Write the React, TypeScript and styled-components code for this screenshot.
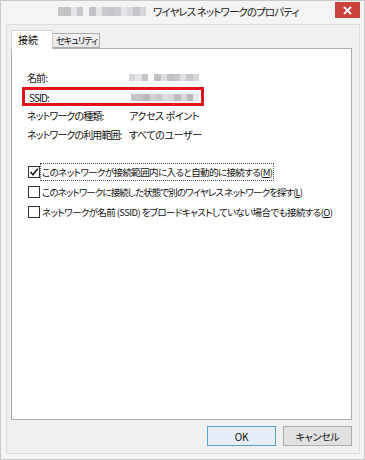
import React from "react";
import styled, { createGlobalStyle } from "styled-components";

const GlobalStyle = createGlobalStyle`
    html, body {
        margin: 0;
        padding: 0;
        background: #ffffff;
    }
    body {
        font-family: "Noto Sans CJK JP", "Noto Sans", sans-serif;
        font-feature-settings: "palt";
        color: #111;
    }
`;

const Window = styled.div`
    width: 365px;
    height: 460px;
    box-sizing: border-box;
    border: 1px solid #c9c9c9;
    background: #f4f4f4;
    display: flex;
    flex-direction: column;
`;

const TitleBar = styled.div`
    height: 22px;
    display: flex;
    align-items: flex-start;
`;

const TitleText = styled.div`
    flex: 1;
    display: flex;
    align-items: center;
    height: 20px;
    padding-left: 57px;
    gap: 7px;
    font-size: 10.5px;
    letter-spacing: -0.9px;
    color: #222;
    white-space: nowrap;
`;

const CloseButton = styled.div`
    width: 25px;
    height: 16px;
    margin: 1px 4px 0 0;
    background: #c9433b;
    display: flex;
    align-items: center;
    justify-content: center;
`;

const Frame = styled.div`
    margin: 1px 4px 0 5px;
    height: 430px;
    box-sizing: border-box;
    border: 1px solid #dcdcdc;
    background: #f0f0f0;
    padding: 5px 5px 0 4px;
    display: flex;
    flex-direction: column;
`;

const TabStrip = styled.div`
    display: flex;
    align-items: flex-end;
    height: 18px;
    position: relative;
    z-index: 1;
`;

const Tab = styled.div<{ active?: boolean }>`
    box-sizing: border-box;
    height: ${(p) => (p.active ? "19px" : "15px")};
    margin-bottom: ${(p) => (p.active ? "-1px" : "0")};
    padding: ${(p) => (p.active ? "3px 6px 0 6px" : "1px 2px 0 3px")};
    border: 1px solid ${(p) => (p.active ? "#d4d4d4" : "#acacac")};
    border-bottom: ${(p) => (p.active ? "none" : "1px solid #acacac")};
    border-left: ${(p) => (p.active ? "1px solid #d4d4d4" : "none")};
    background: ${(p) => (p.active ? "#ffffff" : "linear-gradient(#f2f2f2, #e5e5e5)")};
    font-size: ${(p) => (p.active ? "10px" : "9px")};
    letter-spacing: ${(p) => (p.active ? "0" : "-0.9px")};
    line-height: 12px;
    min-width: ${(p) => (p.active ? "42px" : "47px")};
    white-space: nowrap;
`;

const Panel = styled.div`
    width: 341px;
    height: 372px;
    box-sizing: border-box;
    border: 1px solid #acacac;
    background: #ffffff;
    padding: 19px 0 0 14px;
    display: flex;
    flex-direction: column;
`;

const InfoGrid = styled.div`
    display: grid;
    grid-template-columns: 103px 1fr;
    grid-auto-rows: 19px;
    align-items: center;
    font-size: 10px;
`;

const Label = styled.div`
    white-space: nowrap;
    padding-left: 1px;
    letter-spacing: -0.9px;
`;

const Value = styled.div`
    white-space: nowrap;
    letter-spacing: -0.4px;
`;

const Highlight = styled.div`
    grid-column: 1 / 3;
    display: grid;
    grid-template-columns: 103px 1fr;
    align-items: center;
    box-sizing: border-box;
    margin-left: -4px;
    width: 182px;
    height: 19px;
    padding-left: 3px;
    border: 3px solid #e3151c;
`;

const Mosaic = styled.div<{ w: number; h: number }>`
    display: flex;
    width: ${(p) => p.w}px;
    height: ${(p) => p.h}px;
    filter: blur(0.7px);
    opacity: 0.85;
`;

const MosaicCell = styled.div`
    flex: 1;
    height: 100%;
`;

const OptionList = styled.div`
    margin-top: 18px;
    padding-left: 2px;
    display: flex;
    flex-direction: column;
`;

const OptionRow = styled.label`
    display: flex;
    align-items: center;
    height: 20px;
    font-size: 9.5px;
    white-space: nowrap;
`;

const Box = styled.span`
    width: 12px;
    height: 12px;
    box-sizing: border-box;
    border: 1px solid #333;
    background: #fff;
    display: flex;
    align-items: center;
    justify-content: center;
    flex-shrink: 0;
`;

const OptionText = styled.span<{ focused?: boolean; tight?: boolean }>`
    margin-left: 1px;
    padding: 1px 1px;
    outline: ${(p) => (p.focused ? "1px dotted #555" : "none")};
    letter-spacing: ${(p) => (p.tight ? "-0.9px" : "-0.6px")};
`;

const Key = styled.span`
    text-decoration: underline;
`;

const ButtonRow = styled.div`
    display: flex;
    justify-content: flex-end;
    gap: 7px;
    padding: 6px 0 0 0;
    width: 341px;
`;

const Button = styled.div<{ primary?: boolean }>`
    width: 69px;
    height: 20px;
    box-sizing: border-box;
    border: 1px solid ${(p) => (p.primary ? "#5aa0da" : "#adadad")};
    background: ${(p) => (p.primary ? "#e5eef7" : "#e1e1e1")};
    display: flex;
    align-items: center;
    justify-content: center;
    font-size: 10px;
    letter-spacing: -0.3px;
`;

const shades = (seed: number, n: number) => {
    const out: string[] = [];
    let s = seed;
    for (let i = 0; i < n; i++) {
        s = (s * 9301 + 49297) % 233280;
        const v = 170 + Math.floor((s / 233280) * 60);
        out.push(`rgb(${v},${v},${v + 4})`);
    }
    return out;
};

const Blurred: React.FC<{ w: number; h: number; seed: number; cells: number; gapAt?: number }> = ({ w, h, seed, cells, gapAt }) => (
    <Mosaic w={w} h={h}>
        {shades(seed, cells).map((c, i) => (
            <MosaicCell key={i} style={{ background: i === gapAt ? "transparent" : c }} />
        ))}
    </Mosaic>
);

const Check = () => (
    <svg width="10" height="10" viewBox="0 0 10 10">
        <path d="M1.5 5 L4 7.8 L8.8 1.8" stroke="#222" strokeWidth="1.7" fill="none" />
    </svg>
);

const App: React.FC = () => {
    return (
        <>
            <GlobalStyle />
            <Window>
                <TitleBar>
                    <TitleText>
                        <Blurred w={88} h={9} seed={3} cells={14} gapAt={4} />
                        <span>ワイヤレス ネットワークのプロパティ</span>
                    </TitleText>
                    <CloseButton>
                        <svg width="9" height="9" viewBox="0 0 9 9">
                            <path d="M1 1 L8 8 M8 1 L1 8" stroke="#fff" strokeWidth="1.8" />
                        </svg>
                    </CloseButton>
                </TitleBar>
                <Frame>
                    <TabStrip>
                        <Tab active>接続</Tab>
                        <Tab>セキュリティ</Tab>
                    </TabStrip>
                    <Panel>
                        <InfoGrid>
                            <Label>名前:</Label>
                            <Value>
                                <Blurred w={70} h={7} seed={11} cells={11} gapAt={3} />
                            </Value>
                            <Highlight>
                                <Label>SSID:</Label>
                                <Value>
                                    <Blurred w={68} h={7} seed={27} cells={11} />
                                </Value>
                            </Highlight>
                            <Label>ネットワークの種類:</Label>
                            <Value>アクセス ポイント</Value>
                            <Label>ネットワークの利用範囲:</Label>
                            <Value>すべてのユーザー</Value>
                        </InfoGrid>
                        <OptionList>
                            <OptionRow>
                                <Box><Check /></Box>
                                <OptionText focused>
                                    このネットワークが接続範囲内に入ると自動的に接続する(<Key>M</Key>)
                                </OptionText>
                            </OptionRow>
                            <OptionRow>
                                <Box />
                                <OptionText tight>
                                    このネットワークに接続した状態で別のワイヤレス ネットワークを探す(<Key>L</Key>)
                                </OptionText>
                            </OptionRow>
                            <OptionRow>
                                <Box />
                                <OptionText>
                                    ネットワークが名前 (SSID) をブロードキャストしていない場合でも接続する(<Key>O</Key>)
                                </OptionText>
                            </OptionRow>
                        </OptionList>
                    </Panel>
                    <ButtonRow>
                        <Button primary>OK</Button>
                        <Button>キャンセル</Button>
                    </ButtonRow>
                </Frame>
            </Window>
        </>
    );
};

export default App;
